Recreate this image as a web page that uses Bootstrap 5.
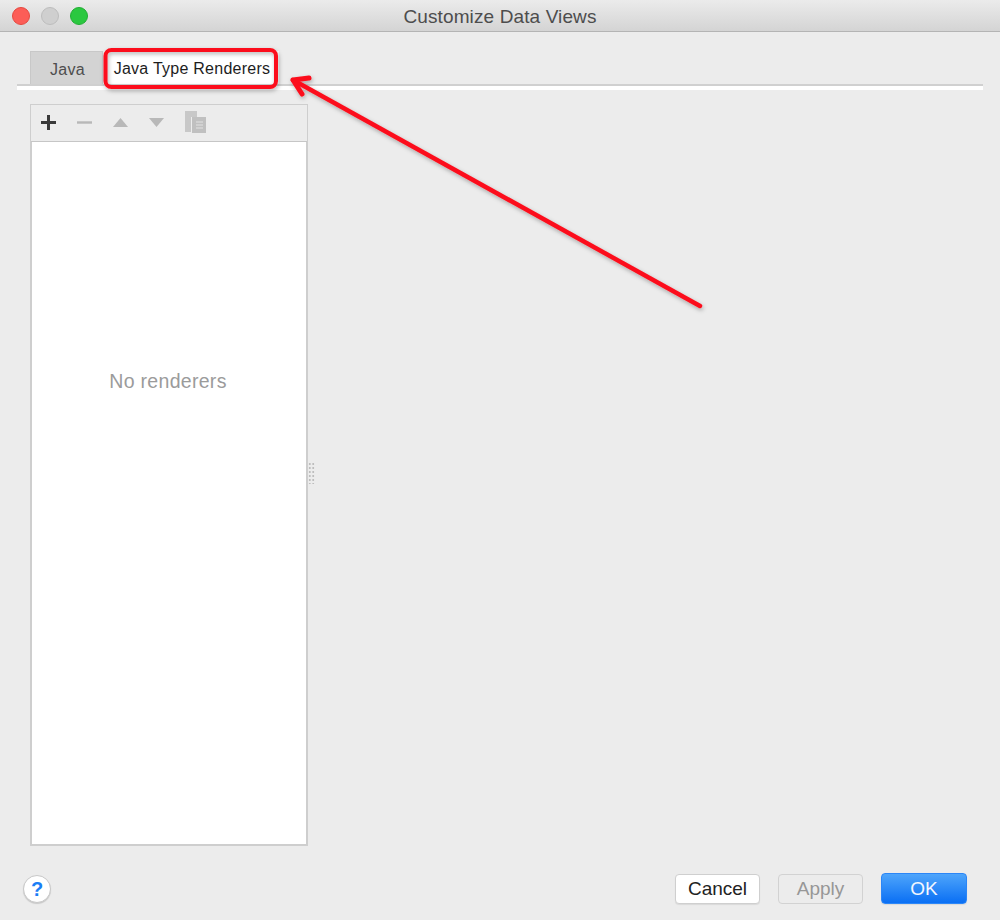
<!doctype html>
<html lang="en">
<head>
<meta charset="utf-8">
<title>Customize Data Views</title>
<link href="https://cdn.jsdelivr.net/npm/bootstrap@5.3.0/dist/css/bootstrap.min.css" rel="stylesheet">
<style>
html,body{height:920px;overflow:hidden}
body{background:#ececec;font-family:"Liberation Sans",Arial,sans-serif;color:#222}
.win{height:920px;position:relative}
.tbar{height:32px;background:linear-gradient(#ebebeb,#d4d4d4);border-bottom:1px solid #b4b4b4;position:relative}
.ttl{font-size:19px;letter-spacing:.12px;color:#4d4d4d;line-height:34px}
.lights{left:12px;top:7px;position:absolute;gap:11px}
.dot{width:18px;height:18px;border-radius:50%;display:block}
.d-red{background:#fc5d57;border:1px solid #e5483f}
.d-gray{background:#cfcfcf;border:1px solid #bdbdbd}
.d-green{background:#2bc840;border:1px solid #21ad33}
.tabs{padding:19px 0 0 30px;height:52px}
.tb{height:33px;font-size:16px;line-height:35px;letter-spacing:.25px}
.tb-off{width:73px;background:#d3d3d3;border:1px solid #c8c8c8;border-bottom:0;color:#4e4e4e;text-align:center;padding-left:2px}
.tb-on{width:172px;background:#fff;color:#1d1d1d;text-align:center;height:34px;padding-right:2px}
.rule{margin:0 17px;border-top:2px solid #d0d0d0;border-bottom:4px solid #fff;box-sizing:content-box;height:0}
.body{padding:14px 0 0 30px}
.panel{width:278px;height:742px;border:2px solid #cecece;border-top-width:1px;background:#fff}
.pbar{height:36px;background:#ececec;border-bottom:1px solid #c6c6c6;padding:0 0 2px 10px;gap:21px;flex:none;box-sizing:border-box;height:37px;margin:0 -1px 0 -1px}
.empty{color:#9b9b9b;font-size:19.5px;letter-spacing:.3px;padding-bottom:222px;padding-right:2px}
.grip{width:7px;height:22px;margin:358px 0 0 0;background-image:radial-gradient(circle,#bdbdbd 1px,transparent 1.2px);background-size:3.5px 4px}
.foot{position:absolute;left:0;right:0;top:873px;padding:0 33px 0 23px}
.help{width:28px;height:28px;border-radius:50%;background:#fff;border:1px solid #c8c8c8;box-shadow:0 1px 1px rgba(0,0,0,.15);color:#1b7ef5;font-weight:700;font-size:20px;line-height:26px;text-align:center;margin-top:2px}
.mbtn{width:85px;height:30px;font-size:19px;line-height:28px;padding:0;border-radius:4px;border:1px solid #cfcfcf;background:#fff;color:#222;box-shadow:0 1px 1px rgba(0,0,0,.08);margin-top:1px}
.mbtn:disabled{background:#ececec;color:#979797;border-color:#d2d2d2;box-shadow:none;opacity:1}
.mbtn-ok{width:86px;height:31px;margin-top:0;background:linear-gradient(#4ea5fb,#0a6ff4);border-color:#2b86f7;color:#f2f7ff}
.btns{gap:18px}
.over{position:absolute;left:0;top:0;width:1000px;height:920px;pointer-events:none}
</style>
</head>
<body>
<div class="win d-flex flex-column">
  <div class="tbar text-center ttl flex-none">
    <div class="lights d-flex">
      <span class="dot d-red"></span><span class="dot d-gray"></span><span class="dot d-green"></span>
    </div>
    Customize Data Views
  </div>
  <div class="tabs d-flex">
    <div class="tb tb-off">Java</div>
    <div class="tb tb-on ms-1">Java Type Renderers</div>
  </div>
  <div class="rule"></div>
  <div class="body d-flex">
    <div class="panel d-flex flex-column">
      <div class="pbar d-flex align-items-center">
        <svg width="15" height="15" viewBox="0 0 15 15"><path d="M7.500 0v15M0 7.500h15" stroke="#3a3a3a" stroke-width="3"/></svg>
        <svg width="15" height="15" viewBox="0 0 15 15"><path d="M0 7.500h15" stroke="#b8b8b8" stroke-width="2.400"/></svg>
        <svg width="15" height="15" viewBox="0 0 15 15"><path d="M0 12 7.500 3 15 12z" fill="#b8b8b8"/></svg>
        <svg width="15" height="15" viewBox="0 0 15 15"><path d="M0 3h15L7.500 12z" fill="#b8b8b8"/></svg>
        <svg width="21" height="22" viewBox="0 0 21 22"><path d="M0 0h12v6H6v15H0z" fill="#c8c8c8"/><path d="M7 6h14v16H7z" fill="#c0c0c0"/><path d="M11 11h7M11 14h7M11 17h7" stroke="#e2e2e2" stroke-width="1"/></svg>
      </div>
      <div class="flex-grow-1 d-flex align-items-center justify-content-center empty">No renderers</div>
    </div>
    <div class="grip ms-0"></div>
  </div>
  <div class="foot d-flex justify-content-between align-items-start">
    <div class="help">?</div>
    <div class="d-flex btns">
      <button type="button" class="btn mbtn">Cancel</button>
      <button type="button" class="btn mbtn" disabled>Apply</button>
      <button type="button" class="btn mbtn mbtn-ok">OK</button>
    </div>
  </div>
  <svg class="over" viewBox="0 0 1000 920">
    <defs><filter id="sh" x="-10%" y="-10%" width="120%" height="120%"><feDropShadow dx="1" dy="2" stdDeviation="2" flood-color="#000" flood-opacity=".3"/></filter></defs>
    <g filter="url(#sh)" fill="none" stroke="#fc0d1b" stroke-linecap="round" stroke-linejoin="round">
      <rect x="105.500" y="50" width="170.500" height="37" rx="6" stroke-width="4"/>
      <path d="M700 306 293 80" stroke-width="4.500"/>
      <path d="M309 78 293 80 302 94" stroke-width="5"/>
    </g>
  </svg>
</div>
<script src="https://cdn.jsdelivr.net/npm/bootstrap@5.3.0/dist/js/bootstrap.bundle.min.js"></script>
</body>
</html>
